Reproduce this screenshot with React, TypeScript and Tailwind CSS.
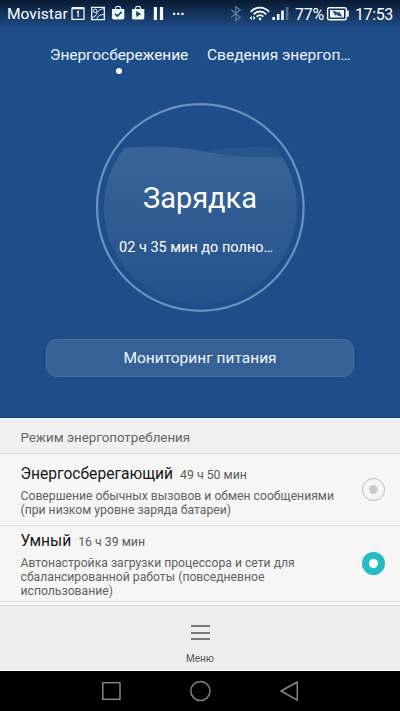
import React from "react";

function StatusBar() {
  return (
    <div className="flex h-7 shrink-0 items-center bg-gradient-to-b from-[#0a1b32] to-[#1e4e89] text-white">
      <span className="ml-[7px] w-[61px] whitespace-nowrap text-[15.5px] leading-7 tracking-[0.05px]">Movistar</span>
      <svg width="120" height="28" viewBox="68 0 120 28" fill="none" stroke="#f2f7fc" className="shrink-0">
        <path d="M72 8.2h12v11.2H72z" strokeWidth="1.3" />
        <path d="M72 8.2h12" strokeWidth="2.2" />
        <path d="M76.8 12.2l1.4-.8v5.7" strokeWidth="1.2" />
        <path d="M91.7 7.4h12.6v12.2H91.7z" strokeWidth="1.3" />
        <circle cx="95.2" cy="10.8" r="1.8" strokeWidth="1" />
        <path d="M92 17.5c2.5-.6 4.3-2 5.2-4.6.8-2.4 3-3.7 6.8-4.3M96.8 19.3c.6-3.3 3-4.9 7.2-4.8" strokeWidth="1" />
        <path d="M112 9h12.3v8.8q0 1.7-1.7 1.7h-9q-1.7 0-1.7-1.7z" fill="#f2f7fc" stroke="none" />
        <path d="M115.5 9.5V8.8a2.6 2.6 0 0 1 5.2 0v.7" strokeWidth="1.1" />
        <path d="M115 13.8l2.4 2.2 4.2-4.2" stroke="#1b4373" strokeWidth="1.7" />
        <path d="M132 9h12.3v8.8q0 1.7-1.7 1.7h-9q-1.7 0-1.7-1.7z" fill="#f2f7fc" stroke="none" />
        <path d="M135.5 9.5V8.8a2.6 2.6 0 0 1 5.2 0v.7" strokeWidth="1.1" />
        <path d="M136.2 11v6l5-3z" fill="#1b4373" stroke="none" />
        <path d="M155.4 7v13M161.5 7v13" strokeWidth="3.2" />
        <path d="M173 12.8h2.2v2.2H173zM177.2 12.8h2.2v2.2h-2.2zM181.4 12.8h2.2v2.2h-2.2z" fill="#f2f7fc" stroke="none" />
      </svg>
      <svg width="107" height="28" viewBox="188 0 107 28" fill="none" stroke="#f5f9fd" className="shrink-0">
        <path d="M231.2 9.8l9 7.4-4.4 3.2V6.6l4.4 3.2-9 7.4" stroke="#5c7898" strokeWidth="1.4" />
        <path d="M250.7 11.8c5.2-5.6 13.4-5.6 18.4 0M253.6 14.3c3.6-3.7 9-3.7 12.6 0M256.6 16.7c2-1.9 4.8-1.9 6.7 0" strokeWidth="1.9" />
        <circle cx="260.1" cy="18.9" r="1.3" fill="#f5f9fd" stroke="none" />
        <path d="M251.8 16l-2.3 2 2.3 2zM253.3 16l2.3 2-2.3 2z" fill="#f5f9fd" stroke="none" />
        <path d="M272.4 17h2.6v3h-2.6zM276.9 14h2.6v6h-2.6zM281.2 10.6h2.6V20h-2.6z" fill="#f5f9fd" stroke="none" />
        <path d="M285.9 7h2.5v13h-2.5z" fill="#537299" stroke="none" />
      </svg>
      <span className="w-[31px] whitespace-nowrap pt-px text-[16px] leading-7 tracking-[-0.2px]">77%</span>
      <svg width="24" height="28" viewBox="326 0 24 28" fill="none" className="shrink-0">
        <rect x="327.6" y="7.7" width="18.7" height="12" rx="1.8" stroke="#f5f9fd" strokeWidth="1.4" />
        <rect x="330" y="10" width="14" height="7.5" fill="#f5f9fd" />
        <path d="M347.7 10.5v6.2" stroke="#f5f9fd" strokeWidth="2.2" />
        <path d="M332.2 10.4l5.2 1.5.6 1 1.3-1.3 3 5.2-5.2-1.4-.7-1.1-1.2 1.4z" fill="#234d7e" />
      </svg>
      <span className="ml-[5px] whitespace-nowrap pt-px text-[16px] leading-7 tracking-[-0.4px]">17:53</span>
    </div>
  );
}

function Gauge() {
  return (
    <div className="relative mx-auto mt-[28px] h-[210px] w-[210px] shrink-0 text-center text-white">
      <svg className="absolute inset-0" width="210" height="210" viewBox="95 102 210 210" fill="none">
        <defs>
          <linearGradient id="water" x1="0" y1="147" x2="0" y2="304" gradientUnits="userSpaceOnUse">
            <stop offset="0" stopColor="#fff" stopOpacity=".125" />
            <stop offset=".5" stopColor="#fff" stopOpacity=".075" />
            <stop offset="1" stopColor="#fff" stopOpacity=".02" />
          </linearGradient>
          <clipPath id="disc">
            <circle cx="200.3" cy="207.5" r="96.5" />
          </clipPath>
        </defs>
        <g clipPath="url(#disc)">
          <path d="M100 150C145 145 176 146 207 152C239 158 269 158 305 157V310H100z" fill="url(#water)" />
          <path d="M207 151C240 145 265 147 305 149V157C269 158 239 158 207 151z" fill="#fff" fillOpacity=".045" />
        </g>
        <circle cx="200.3" cy="207.5" r="103.3" stroke="#6b91bd" strokeWidth="2.2" />
      </svg>
      <div className="relative pt-[76px]">
        <div className="text-[29px] leading-[40px]">Зарядка</div>
        <div className="ml-[24px] mt-[20px] whitespace-nowrap text-left text-[14.5px] leading-5">02 ч 35 мин до полно…</div>
      </div>
    </div>
  );
}

type ModeProps = { name: string; time: string; lines: string[]; selected?: boolean; box: string; textPad: string };

function Mode({ name, time, lines, selected, box, textPad }: ModeProps) {
  return (
    <div className={`flex shrink-0 items-center border-b border-[#dedede] bg-[#f6f6f6] pl-[20.5px] pr-[15px] ${box}`}>
      <div className={`flex-1 self-start ${textPad}`}>
        <div className="flex items-baseline gap-[7px] whitespace-nowrap leading-[22px]">
          <span className="text-[15.6px] text-[#171717]">{name}</span>
          <span className="text-[12.3px] text-[#5a5a5a]">{time}</span>
        </div>
        <div className="mt-[3px] whitespace-nowrap text-[12.2px] leading-[14px] text-[#626262]">
          {lines.map((l) => (
            <div key={l}>{l}</div>
          ))}
        </div>
      </div>
      {selected ? (
        <span className="flex h-[23px] w-[23px] items-center justify-center rounded-full bg-[#27bcc2]">
          <span className="h-[9px] w-[9px] rounded-full bg-white" />
        </span>
      ) : (
        <span className="flex h-[23px] w-[23px] items-center justify-center rounded-full border border-[#b9b9b9]">
          <span className="h-[9px] w-[9px] rounded-full bg-[#cbcbcb]" />
        </span>
      )}
    </div>
  );
}

export default function App() {
  return (
    <div className="flex h-[711px] w-[400px] flex-col overflow-hidden bg-black font-['Roboto',sans-serif]">
      <div className="flex h-[418px] shrink-0 flex-col border-b border-[#164078] bg-[#1e4e89]">
        <StatusBar />
        <div className="ml-[50px] mt-[16px] flex gap-[19px] whitespace-nowrap text-[15.5px] leading-[22px] text-[#edf5fc]">
          <div className="w-[138px] tracking-[-0.07px]">
            Энергосбережение
            <div className="mx-auto mt-[2px] h-[6px] w-[6px] rounded-full bg-white" />
          </div>
          <span>Сведения энергоп…</span>
        </div>
        <Gauge />
        <button className="mx-auto mt-[27px] h-[38px] w-[308px] shrink-0 rounded-[11px] border border-[#45709f] bg-[#366197] pt-[2px] text-[15.5px] text-[#f0f6fc]">
          Мониторинг питания
        </button>
      </div>
      <div className="h-[36px] shrink-0 border-b border-[#dedede] bg-[#f0f0f0] pl-[20.5px] pt-[2px] text-[13.3px] leading-[36px] text-[#666]">
        Режим энергопотребления
      </div>
      <Mode
        name="Энергосберегающий"
        time="49 ч 50 мин"
        lines={["Совершение обычных вызовов и обмен сообщениями", "(при низком уровне заряда батареи)"]}
        box="h-[72px]"
        textPad="pt-[9px]"
      />
      <Mode
        name="Умный"
        time="16 ч 39 мин"
        lines={["Автонастройка загрузки процессора и сети для", "сбалансированной работы (повседневное", "использование)"]}
        selected
        box="h-[76px]"
        textPad="pt-[4px]"
      />
      <div className="h-[3px] shrink-0 bg-[#fafafa]" />
      <div className="flex h-[66px] shrink-0 flex-col items-center border-b border-t border-b-white border-t-[#dadada] bg-[#eeeeee] pt-[19px]">
        <div className="flex w-[19px] flex-col gap-[4.5px]">
          <span className="h-[2px] bg-[#777]" />
          <span className="h-[2px] bg-[#777]" />
          <span className="h-[2px] bg-[#777]" />
        </div>
        <span className="mt-[12px] text-[10px] leading-[14px] text-[#555]">Меню</span>
      </div>
      <div className="flex h-[40px] shrink-0 items-center bg-black">
        <svg width="400" height="40" viewBox="0 671 400 40" fill="none" stroke="#858585" strokeWidth="1.5">
          <rect x="102.8" y="682.7" width="17.2" height="16.6" />
          <circle cx="200.4" cy="691" r="9.6" />
          <path d="M297.3 682v18.2L281 691z" strokeLinejoin="round" />
        </svg>
      </div>
    </div>
  );
}
